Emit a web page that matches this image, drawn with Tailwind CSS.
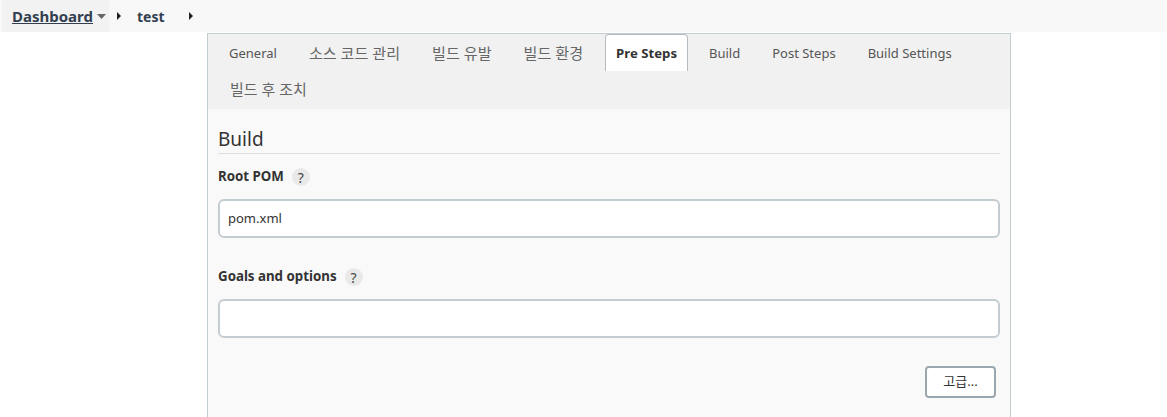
<!DOCTYPE html>
<html lang="ko">
<head>
    <meta charset="UTF-8">
    <title>test - Jenkins</title>
    <script src="https://cdn.jsdelivr.net/npm/@tailwindcss/browser@4"></script>
</head>
<body class="h-[417px] overflow-hidden bg-white font-['Noto_Sans','Noto_Sans_CJK_KR',sans-serif] text-[#333]">
    <!-- breadcrumb -->
    <div class="flex h-8 items-center bg-[#f8f8f8] pl-[2px] text-[14px] font-bold text-[#333f50]">
        <div class="flex h-8 w-[107px] items-center bg-[#f2f2f2] pl-[10px]">
            <a href="#" class="text-[15px] underline">Dashboard</a>
            <svg class="ml-[4px]" width="9" height="5" viewBox="0 0 9 5"><path d="M0 0h9L4.5 5z" fill="#666"/></svg>
        </div>
        <svg class="ml-[8px]" width="4" height="8" viewBox="0 0 4 8"><path d="M0 0l4 4L0 8z" fill="#222"/></svg>
        <span class="ml-[16px]">test</span>
        <svg class="ml-[24px]" width="4" height="8" viewBox="0 0 4 8"><path d="M0 0l4 4L0 8z" fill="#222"/></svg>
    </div>

    <!-- config panel -->
    <div class="ml-[207px] mt-px h-[384px] w-[804px] border-x border-t border-[#c3ccd1] bg-[#f9f9f9]">
        <div class="flex h-[75px] flex-wrap content-start bg-[#f1f1f1] pl-[5px] pt-px text-[13px] text-[#555]">
            <a class="flex h-9 items-center px-4 pt-[2px]">General</a>
            <a class="flex h-9 items-center px-4 text-[15.1px] text-[#666]">소스 코드 관리</a>
            <a class="flex h-9 items-center px-4 text-[15.1px] text-[#666]">빌드 유발</a>
            <a class="flex h-9 items-center px-4 text-[15.1px] text-[#666]">빌드 환경</a>
            <a class="-mt-px ml-[6px] mr-[5px] flex h-[37px] items-center rounded-t-[4px] border-x border-t border-[#b4bcc1] bg-white px-[10px] pt-[2px] text-[13.2px] font-bold text-[#333]">Pre Steps</a>
            <a class="flex h-9 items-center px-4 pt-[2px]">Build</a>
            <a class="flex h-9 items-center px-4 pt-[2px]">Post Steps</a>
            <a class="flex h-9 items-center px-4 pt-[2px]">Build Settings</a>
            <a class="flex h-9 w-full items-center pl-[17px] text-[15px] text-[#666]">빌드 후 조치</a>
        </div>

        <div class="px-[10px]">
            <h2 class="mt-[17px] border-b border-[#dfdfdf] text-[19px] leading-[27px] text-[#333]">Build</h2>

            <div class="mt-[11px] flex h-[24px] items-center text-[13.3px] font-bold text-[#333]">
                <span>Root POM</span>
                <span class="ml-[8px] flex h-[18px] w-[18px] items-center justify-center rounded-full bg-[#e9e9e9] text-[14px] font-normal text-[#444]">?</span>
            </div>
            <div class="mt-[10px] flex h-[39px] items-center rounded-[6px] border-2 border-[#c3ccd1] bg-white pl-2 text-[13px] text-[#333]">pom.xml</div>

            <div class="mt-[27px] flex h-[24px] items-center text-[13.3px] font-bold text-[#333]">
                <span>Goals and options</span>
                <span class="ml-[8px] flex h-[18px] w-[18px] items-center justify-center rounded-full bg-[#e9e9e9] text-[14px] font-normal text-[#444]">?</span>
            </div>
            <div class="mt-[10px] h-[39px] rounded-[6px] border-2 border-[#c3ccd1] bg-white"></div>

            <div class="mt-[28px] flex justify-end pr-[4px]">
                <button class="h-[32px] w-[71px] rounded-[4px] border-2 border-[#9aa7af] bg-white text-[13px] text-[#333]">고급...</button>
            </div>
        </div>
    </div>
</body>
</html>
